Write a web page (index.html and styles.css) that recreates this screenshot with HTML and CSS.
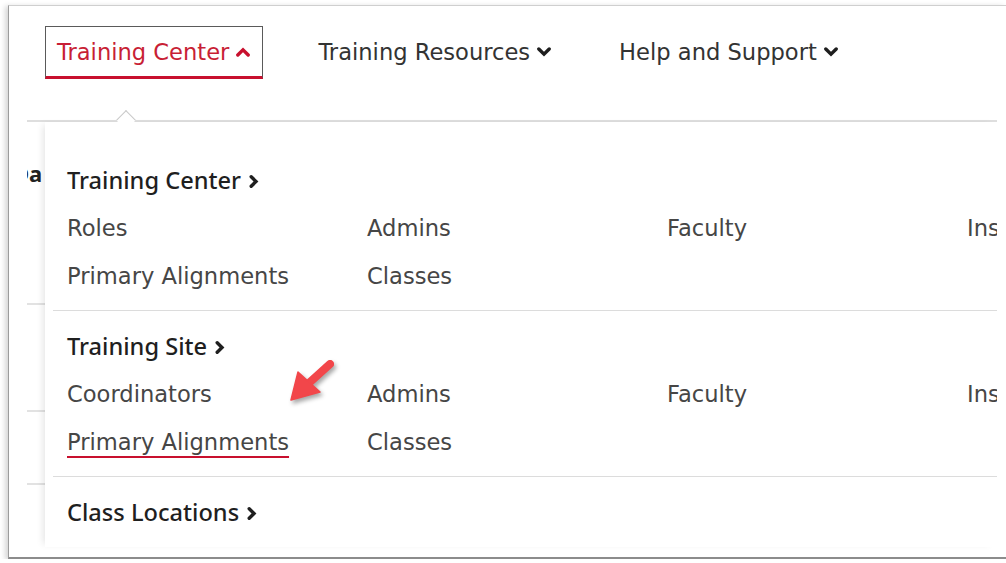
FILE: index.html
```html
<!DOCTYPE html>
<html lang="en">
<head>
<meta charset="utf-8">
<title>Training Center menu</title>
<link rel="stylesheet" href="styles.css">
</head>
<body>
<div class="frame">
  <nav class="topnav">
    <a class="nav-item is-open" href="#">Training Center
      <svg class="nav-caret" viewBox="0 0 14 10" aria-hidden="true"><polyline points="1.8,8 7,2.8 12.2,8"/></svg>
    </a>
    <a class="nav-item" href="#">Training Resources
      <svg class="nav-caret" viewBox="0 0 14 10" aria-hidden="true"><polyline points="1.8,2 7,7.2 12.2,2"/></svg>
    </a>
    <a class="nav-item" href="#">Help and Support
      <svg class="nav-caret" viewBox="0 0 14 10" aria-hidden="true"><polyline points="1.8,2 7,7.2 12.2,2"/></svg>
    </a>
  </nav>

  <div class="stage">
    <div class="page-under">
      <div class="under-title"><span>Da</span></div>
      <div class="under-rule rule-1"></div>
      <div class="under-rule rule-2"></div>
      <div class="under-rule rule-3"></div>
    </div>

    <div class="mega">
      <section class="mega-sec">
        <h3 class="mega-head">Training Center
          <svg class="head-chev" viewBox="0 0 10 13" aria-hidden="true"><polyline points="2.2,1.8 7,6.5 2.2,11.2"/></svg>
        </h3>
        <ul class="mega-grid">
          <li><a href="#">Roles</a></li>
          <li><a href="#">Admins</a></li>
          <li><a href="#">Faculty</a></li>
          <li><a href="#">Instructors</a></li>
          <li><a href="#">Primary Alignments</a></li>
          <li><a href="#">Classes</a></li>
        </ul>
      </section>

      <section class="mega-sec">
        <h3 class="mega-head">Training Site
          <svg class="head-chev" viewBox="0 0 10 13" aria-hidden="true"><polyline points="2.2,1.8 7,6.5 2.2,11.2"/></svg>
        </h3>
        <ul class="mega-grid">
          <li><a href="#">Coordinators</a></li>
          <li><a href="#">Admins</a></li>
          <li><a href="#">Faculty</a></li>
          <li><a href="#">Instructors</a></li>
          <li><a href="#" class="is-current">Primary Alignments</a></li>
          <li><a href="#">Classes</a></li>
        </ul>
      </section>

      <section class="mega-sec">
        <h3 class="mega-head">Class Locations
          <svg class="head-chev" viewBox="0 0 10 13" aria-hidden="true"><polyline points="2.2,1.8 7,6.5 2.2,11.2"/></svg>
        </h3>
      </section>
    </div>
  </div>

  <!-- callout arrow drawn over the menu -->
  <svg class="callout" viewBox="0 0 60 55" aria-hidden="true">
    <line x1="50" y1="9" x2="29" y2="28"/>
    <polygon points="11,45 18,17 40,37"/>
  </svg>
</div>
</body>
</html>
```
FILE: styles.css
```css
* { box-sizing: border-box; }

html, body {
  margin: 0;
  padding: 0;
  background: #ffffff;
}

body {
  font-family: "DejaVu Sans", "Noto Sans", sans-serif;
  color: #444;
  overflow: hidden;
}

a { color: inherit; text-decoration: none; }

/* ---------- outer window ---------- */
.frame {
  position: relative;
  margin: 5px 0 0 8px;
  width: 998px;
  height: 554px;
  background: #fff;
  border-left: 1px solid #9c9c9c;
  border-top: 1px solid #cfcfcf;
  border-bottom: 2px solid #8c8c8c;
  box-shadow: -3px 1px 5px rgba(0, 0, 0, 0.16);
  overflow: hidden;
}

/* ---------- top navigation ---------- */
.topnav {
  display: flex;
  gap: 43px;
  padding: 20px 0 0 36px;
}

.nav-item {
  display: flex;
  align-items: center;
  gap: 7px;
  height: 53px;
  padding: 0 12px 0 11px;
  font-size: 22.6px;
  line-height: 28px;
  color: #333;
  border: 1px solid transparent;
  border-bottom-width: 3px;
}

.nav-item.is-open {
  color: #c81f35;
  border-color: #5a5a5a;
  border-bottom-color: #c8102e;
}

.nav-caret {
  width: 14px;
  height: 10px;
  margin-top: 1px;
}

.nav-caret polyline {
  fill: none;
  stroke: #1e1e1e;
  stroke-width: 3.4;
  stroke-linejoin: miter;
  stroke-linecap: round;
}

.nav-item.is-open .nav-caret polyline { stroke: #c8102e; }

/* ---------- dropdown area ---------- */
.stage {
  position: relative;
  display: flex;
  margin: 41px 9px 0 18px;
  border-top: 2px solid #dedede;
}

/* notch pointing at the open nav item */
.stage::before {
  content: "";
  position: absolute;
  left: 92px;
  top: -9px;
  width: 13px;
  height: 13px;
  background: #fff;
  border-top: 1.5px solid #c9c9c9;
  border-left: 1.5px solid #c9c9c9;
  transform: rotate(45deg);
}

/* page content sitting behind the menu */
.page-under {
  width: 18px;
  overflow: hidden;
}

.under-title {
  margin-top: 37px;
  height: 28px;
  white-space: nowrap;
  font-family: "Noto Sans", sans-serif;
  font-weight: 700;
  font-size: 22px;
  line-height: 28px;
  color: #222;
}

.under-title span { display: inline-block; margin-left: -14px; }

.under-rule {
  height: 2px;
  background: #e2e2e2;
}

.rule-1 { margin-top: 116px; }
.rule-2 { margin-top: 105px; }
.rule-3 { margin-top: 71px; }

/* mega menu panel */
.mega {
  flex: 1;
  height: 425px;
  padding-top: 34px;
  overflow: hidden;
  background: #fff;
  box-shadow: -5px 0 7px -3px rgba(0, 0, 0, 0.10);
}

.mega-sec {
  margin-left: 8px;
  padding: 0 0 10px 14px;
}

.mega-sec + .mega-sec {
  border-top: 1px solid #dcdcdc;
  padding-top: 11px;
}

.mega-head {
  display: flex;
  align-items: center;
  gap: 8px;
  margin: 0;
  height: 48px;
  font-family: "Noto Sans", sans-serif;
  font-weight: 500;
  font-size: 23.6px;
  color: #1f1f1f;
  white-space: nowrap;
}

.head-chev {
  width: 10px;
  height: 13px;
  margin-top: 3px;
}

.head-chev polyline {
  fill: none;
  stroke: #1f1f1f;
  stroke-width: 3.4;
  stroke-linecap: round;
}

.mega-grid {
  display: grid;
  grid-template-columns: repeat(4, 300px);
  grid-auto-rows: 48px;
  margin: 0;
  padding: 0;
  list-style: none;
}

.mega-grid li {
  display: flex;
  align-items: center;
  white-space: nowrap;
  font-size: 22.6px;
  color: #464646;
}

.mega-grid a.is-current {
  text-decoration: underline;
  text-decoration-color: #c8102e;
  text-decoration-thickness: 2px;
  text-underline-offset: 6px;
}

/* ---------- callout arrow ---------- */
.callout {
  position: absolute;
  left: 271px;
  top: 349px;
  width: 60px;
  height: 55px;
  overflow: visible;
  filter: drop-shadow(2px 3px 2px rgba(0, 0, 0, 0.35));
}

.callout line {
  stroke: #f2464a;
  stroke-width: 8;
  stroke-linecap: round;
}

.callout polygon {
  fill: #f2464a;
  stroke: #f2464a;
  stroke-width: 1.5;
  stroke-linejoin: round;
}
```
